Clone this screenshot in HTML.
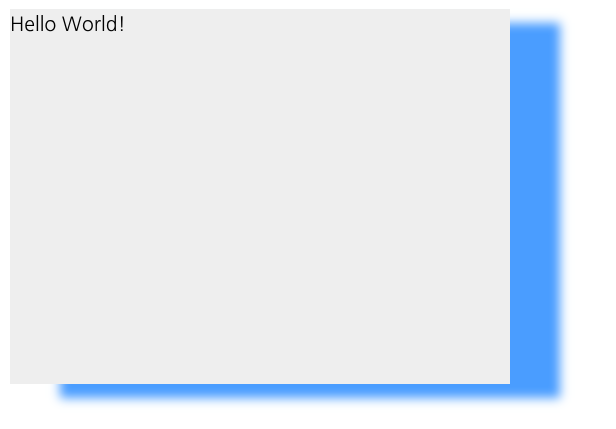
<!DOCTYPE html>
<html><head><meta charset="utf-8"><style>
html,body{margin:0;padding:0;background:#fff;width:616px;height:429px;overflow:hidden}
.box{position:absolute;left:10px;top:9px;width:500px;height:375px;background:#eeeeee;
box-shadow:50px 14px 10px #4a9dff;font-family:"NanumGothic","Liberation Sans",sans-serif;font-size:19.6px;color:#000;line-height:31px}
</style></head><body>
<div class="box">Hello World!</div>
</body></html>
